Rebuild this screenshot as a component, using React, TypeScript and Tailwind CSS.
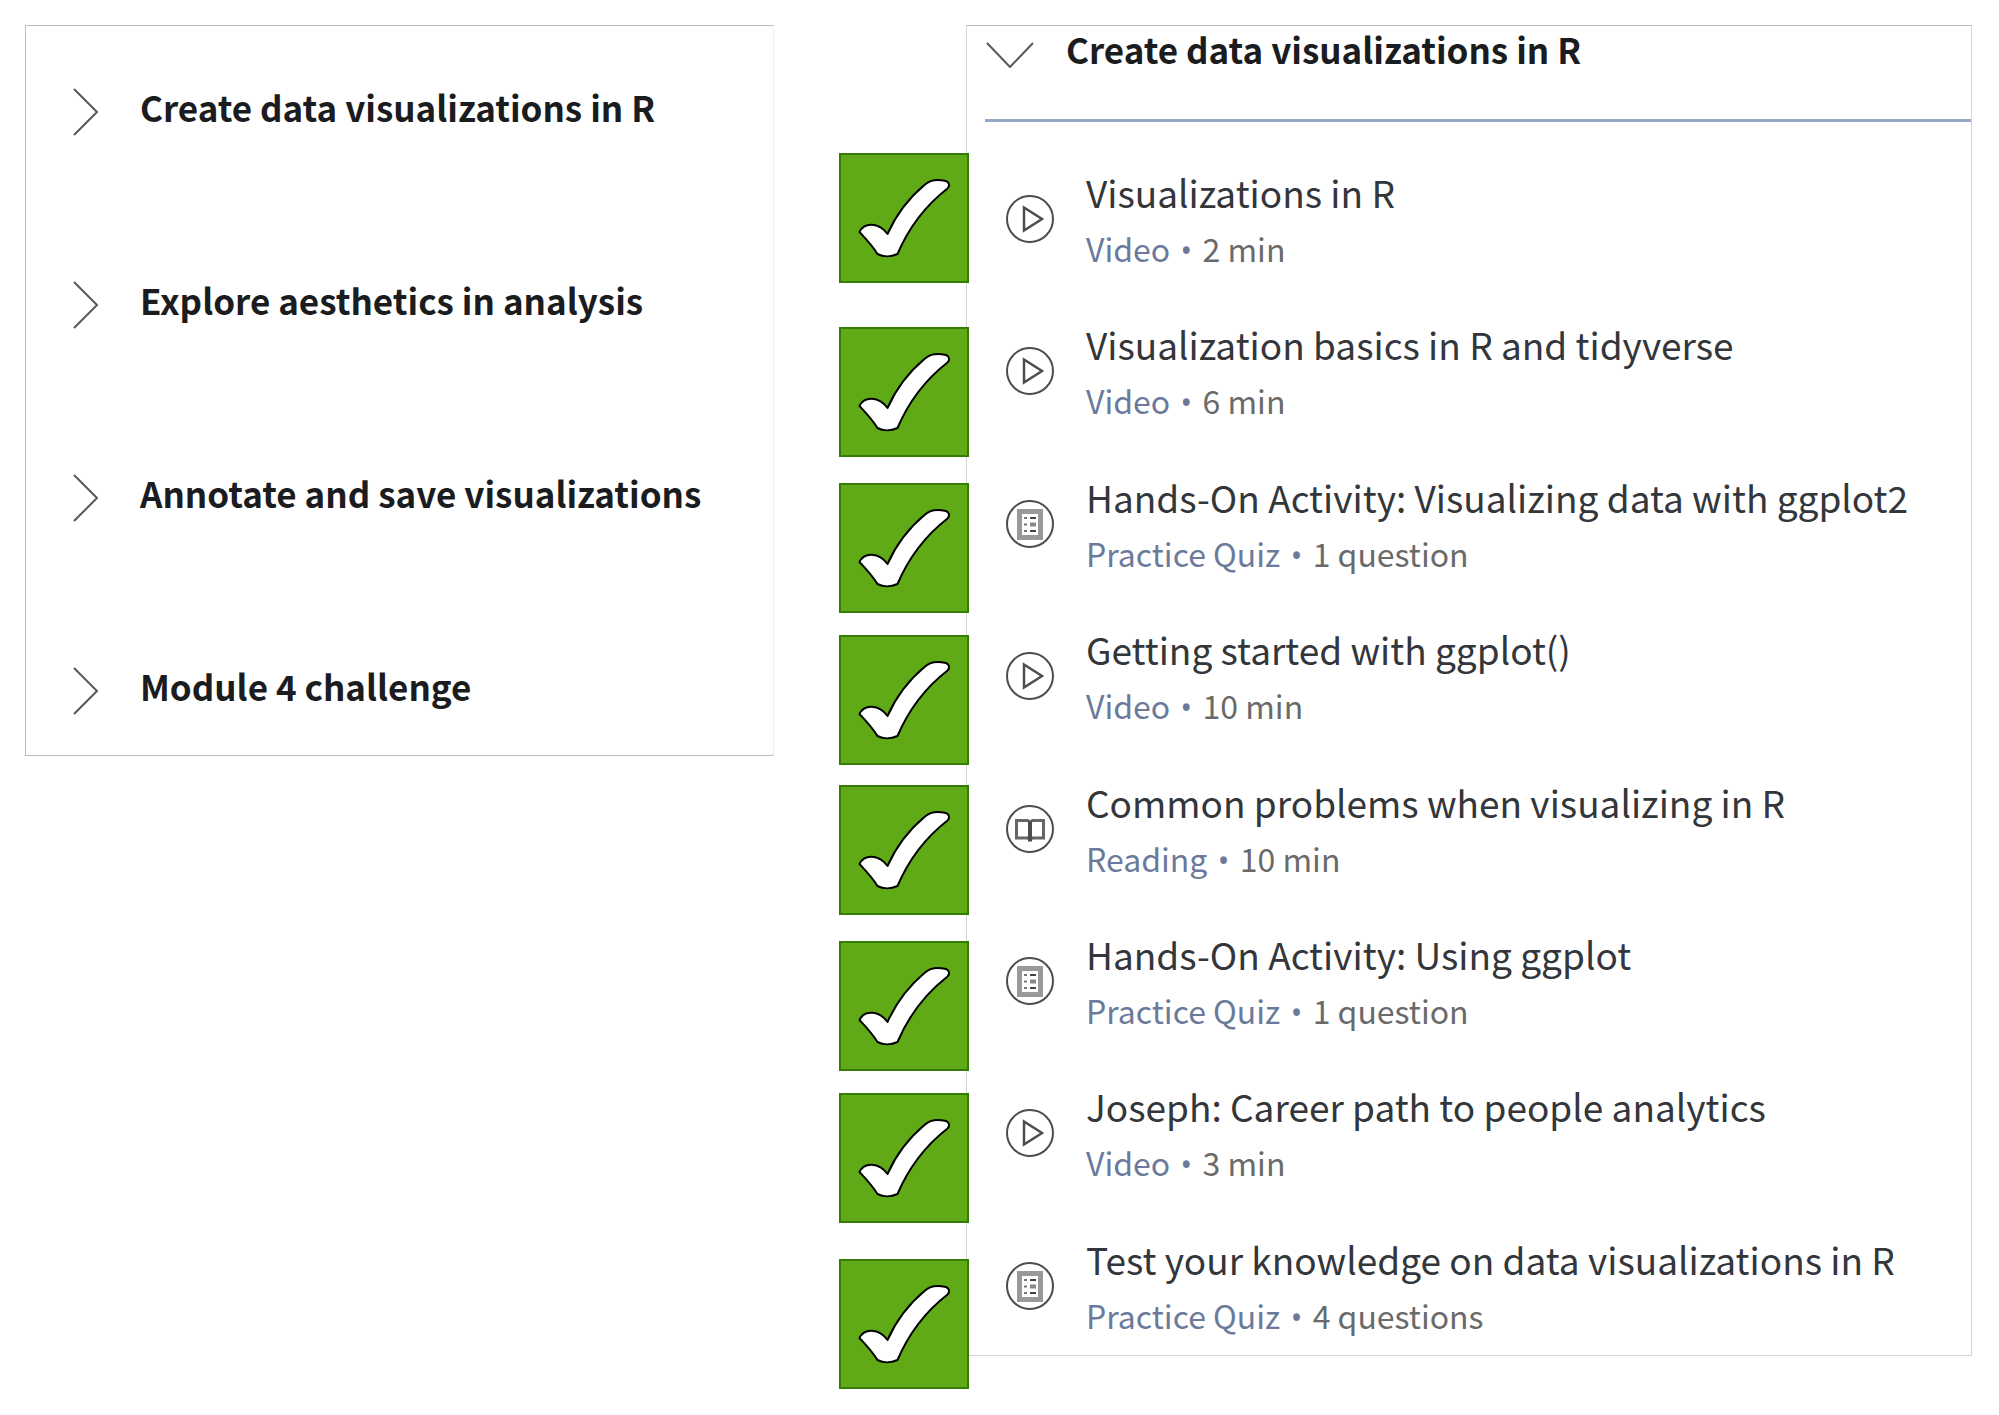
type Kind = "video" | "quiz" | "reading";

type Lesson = {
  title: string;
  kind: Kind;
  label: string;
  length: string;
  badgeGap: string;
};

const modules = [
  "Create data visualizations in R",
  "Explore aesthetics in analysis",
  "Annotate and save visualizations",
  "Module 4 challenge",
];

const lessons: Lesson[] = [
  { title: "Visualizations in R", kind: "video", label: "Video", length: "2 min", badgeGap: "mt-32" },
  { title: "Visualization basics in R and tidyverse", kind: "video", label: "Video", length: "6 min", badgeGap: "mt-11" },
  { title: "Hands-On Activity: Visualizing data with ggplot2", kind: "quiz", label: "Practice Quiz", length: "1 question", badgeGap: "mt-[26px]" },
  { title: "Getting started with ggplot()", kind: "video", label: "Video", length: "10 min", badgeGap: "mt-[22px]" },
  { title: "Common problems when visualizing in R", kind: "reading", label: "Reading", length: "10 min", badgeGap: "mt-5" },
  { title: "Hands-On Activity: Using ggplot", kind: "quiz", label: "Practice Quiz", length: "1 question", badgeGap: "mt-[26px]" },
  { title: "Joseph: Career path to people analytics", kind: "video", label: "Video", length: "3 min", badgeGap: "mt-[22px]" },
  { title: "Test your knowledge on data visualizations in R", kind: "quiz", label: "Practice Quiz", length: "4 questions", badgeGap: "mt-9" },
];

function ChevronRight() {
  return (
    <svg viewBox="0 0 26 48" className="h-12 w-[26px] shrink-0" fill="none" stroke="#55585c" strokeWidth="2" aria-hidden="true">
      <path d="M1 1 L24 24 L1 47" />
    </svg>
  );
}

function ChevronDown() {
  return (
    <svg viewBox="0 0 48 26" className="h-[26px] w-12 shrink-0" fill="none" stroke="#55585c" strokeWidth="2" aria-hidden="true">
      <path d="M1 1 L24 25 L47 1" />
    </svg>
  );
}

function LessonIcon({ kind }: { kind: Kind }) {
  return (
    <svg viewBox="0 0 48 48" className="mt-[27px] size-12 shrink-0" fill="none" stroke="#4d4d4d" strokeWidth="2" aria-hidden="true">
      <circle cx="24" cy="24" r="23" />
      {kind === "video" && <path d="M18 12.5 L36 24 L18 35.5 Z" strokeWidth="2.5" />}
      {kind === "quiz" && (
        <>
          <rect x="13.5" y="11.5" width="21" height="26" stroke="#999999" strokeWidth="5" />
          <path d="M18 18h3M18 24.5h3M18 31h3" stroke="#777777" />
          <path d="M24 18h6M24 31h6" stroke="#444444" />
          <path d="M24 24.5h6" stroke="#888888" strokeWidth="4" />
        </>
      )}
      {kind === "reading" && (
        <>
          <path d="M10.5 15.5h11L24 17l2.5-1.5h11v17.5h-11L24 34.5 21.5 33h-11z" stroke="#666666" strokeWidth="3" />
          <path d="M24 16.5V36.5" strokeWidth="4" />
        </>
      )}
    </svg>
  );
}

function DoneBadge({ lesson }: { lesson: Lesson }) {
  return (
    <label className={`grid size-[130px] shrink-0 ${lesson.badgeGap}`}>
      <input
        type="checkbox"
        defaultChecked
        aria-label={`${lesson.title} completed`}
        className="col-start-1 row-start-1 size-full appearance-none border-2 border-[#347c05] bg-[#60a917]"
      />
      <svg viewBox="0 0 130 130" className="pointer-events-none col-start-1 row-start-1 size-full" aria-hidden="true">
        <path
          d="M20.5 79 C25 69 40 69 48.5 81 C57 62 71 44 86 31.5 C92 26 101 26.5 107 28 C110.5 29.5 111 33 108.500 35.5 C86 53 70 74 58.5 101 C52 104 44 104 38.5 101 C33 92 28 87 20.5 79 Z"
          fill="#ffffff"
          stroke="#000000"
          strokeWidth="2"
          strokeLinejoin="round"
        />
      </svg>
    </label>
  );
}

export default function App() {
  return (
    <main className="grid grid-cols-[minmax(0,749fr)_192px_minmax(0,1006fr)] items-start bg-white pt-[25px] pr-[27px] pb-[25px] pl-[25px] font-['Noto_Sans_CJK_SC','Noto_Sans',sans-serif] text-[#1a1c20]">
      <nav
        aria-label="Modules"
        className="flex flex-col gap-[145px] border border-[#bdbdbd] border-r-[#eeeeee] pt-[62px] pb-10 pl-[47px]"
      >
        {modules.map((name) => (
          <button key={name} type="button" className="flex h-12 items-center gap-[41px] text-left">
            <ChevronRight />
            <span className="pb-[10px] text-[35px] leading-10 font-bold whitespace-nowrap">{name}</span>
          </button>
        ))}
      </nav>

      <div className="relative z-10 -mr-[3px] flex flex-col items-end">
        {lessons.map((lesson) => (
          <DoneBadge key={lesson.title} lesson={lesson} />
        ))}
      </div>

      <section className="border border-[#d4d4d4] border-t-[#bdbdbd]">
        <div className="pl-[18px]">
          <h2 className="h-24 border-b-3 border-[#96a7c6]">
            <button type="button" aria-expanded="true" className="flex items-start gap-8 pt-[3px] pl-px text-left">
              <span className="flex h-13 items-center">
                <ChevronDown />
              </span>
              <span className="text-[35px] leading-10 font-bold whitespace-nowrap">Create data visualizations in R</span>
            </button>
          </h2>
        </div>
        <ul className="mt-3.5 grid h-[1219px] auto-rows-fr pl-[39px]">
          {lessons.map((lesson) => (
            <li key={lesson.title} className="pt-8">
              <a href="#" className="flex items-start gap-8">
                <LessonIcon kind={lesson.kind} />
                <span className="flex flex-col gap-3 whitespace-nowrap">
                  <span className="text-[37px] leading-12 text-[#33363a]">{lesson.title}</span>
                  <span className="text-[32px] leading-10 text-[#6a6a6a]">
                    <span className="text-[#6b7a9b]">
                      {lesson.label} <span className="mx-[3px] font-['Open_Sans',sans-serif]">•</span>
                    </span>{" "}
                    {lesson.length}
                  </span>
                </span>
              </a>
            </li>
          ))}
        </ul>
      </section>
    </main>
  );
}
